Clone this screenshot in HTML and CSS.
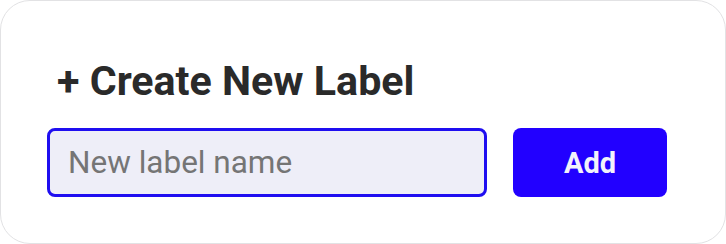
FILE: index.html
```html
<!DOCTYPE html>
<html lang="en">
<head>
  <meta charset="UTF-8" />
  <meta name="viewport" content="width=device-width, initial-scale=1.0" />
  <title>Create New Label</title>
  <link rel="stylesheet" href="styles.css">
</head>
<body>
  <section class="label-card">
    <h2 class="label-title">+ Create New Label</h2>
    <form class="label-form" id="label-form">
      <input type="text" class="label-input" id="label-name" placeholder="New label name" />
      <button type="submit" class="add-btn">Add</button>
    </form>
  </section>
</body>
</html>
```

FILE: styles.css
```css
/* General Styles */
body {
  font-family: Roboto, "Liberation Sans", Arial, sans-serif;
  margin: 0;
  padding: 0;
  background-color: #ffffff;
}

.label-card {
  box-sizing: border-box;
  width: 726px;
  height: 244px;
  padding: 56px 46px 0 46px;
  border: 1px solid #e2e2e4;
  border-radius: 30px;
  background: white;
}

.label-title {
  margin: 0 0 23px 10px;
  font-size: 41.2px;
  line-height: 48px;
  font-weight: 700;
  color: #2a2a2a;
}

/* Form */
.label-form {
  display: flex;
  gap: 26px;
}

.label-input {
  box-sizing: border-box;
  width: 440px;
  height: 69px;
  padding: 0 18px;
  border: 3px solid #1f0ef0;
  border-radius: 8px;
  background-color: #eeeef8;
  font-family: Roboto, "Liberation Sans", Arial, sans-serif;
  font-size: 31.5px;
  color: #333;
  outline: none;
}

.label-input::placeholder {
  color: #757575;
}

.add-btn {
  width: 154px;
  height: 69px;
  border: none;
  border-radius: 8px;
  background-color: #2200ff;
  color: #f2f2fb;
  font-family: Roboto, "Liberation Sans", Arial, sans-serif;
  font-size: 29px;
  font-weight: 700;
  cursor: pointer;
}
```
